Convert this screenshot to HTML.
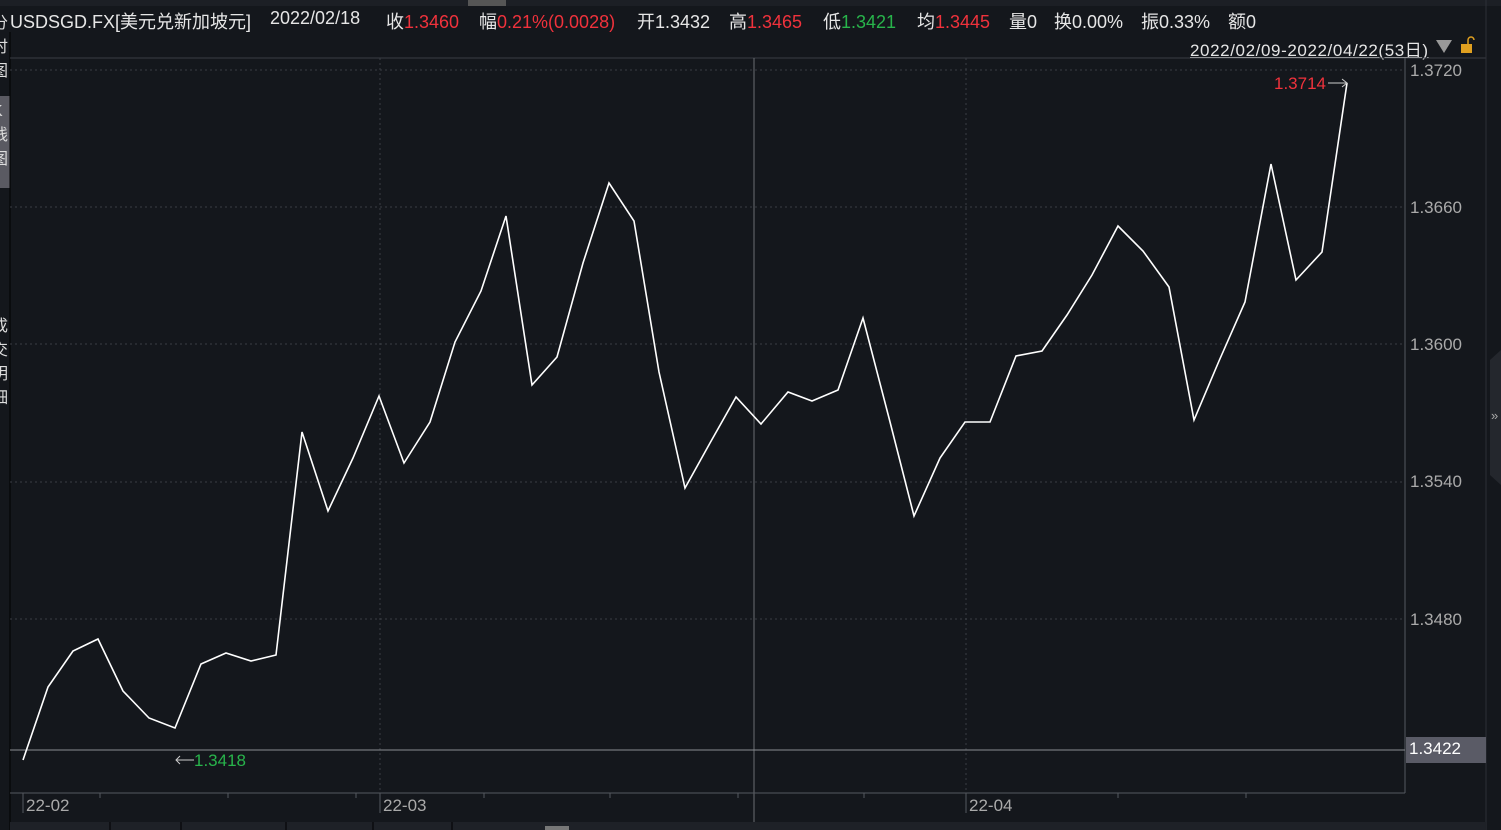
<!DOCTYPE html>
<html><head><meta charset="utf-8"><style>
body{margin:0;width:1501px;height:830px;background:#14171c;overflow:hidden;font-family:"Liberation Sans","Noto Sans CJK SC",sans-serif;position:relative}
.t{position:absolute;white-space:nowrap;font-size:18px;color:#e6e6e6}
.h{top:8px;font-size:18px}
.r{color:#f0323c}.g{color:#28b44b}
.a{font-size:17px;color:#aaa}
</style></head><body>
<div style="position:absolute;left:0;top:0;width:1501px;height:6px;background:#1c1f25"></div>
<div style="position:absolute;left:468px;top:0;width:38px;height:6px;background:#555"></div>
<div class="t h" style="left:10px">USDSGD.FX[美元兑新加坡元]</div>
<div class="t h" style="left:270px">2022/02/18</div>
<div class="t h" style="left:386px">收<span class="r">1.3460</span></div>
<div class="t h" style="left:479px">幅<span class="r">0.21%(0.0028)</span></div>
<div class="t h" style="left:637px">开1.3432</div>
<div class="t h" style="left:729px">高<span class="r">1.3465</span></div>
<div class="t h" style="left:823px">低<span class="g">1.3421</span></div>
<div class="t h" style="left:917px">均<span class="r">1.3445</span></div>
<div class="t h" style="left:1009px">量0</div>
<div class="t h" style="left:1054px">换0.00%</div>
<div class="t h" style="left:1141px">振0.33%</div>
<div class="t h" style="left:1228px">额0</div>
<div class="t" style="left:1190px;top:36px;font-size:17px;letter-spacing:0.6px;text-decoration:underline">2022/02/09-2022/04/22(53日)</div>
<svg style="position:absolute;left:0;top:0" width="1501" height="830">
<rect x="0" y="96" width="10" height="92" fill="#5a5a62"/>
<line x1="10" y1="32" x2="10" y2="830" stroke="#000"/>
<polygon points="1436,40 1452,40 1444,53" fill="#999"/>
<rect x="1461" y="44" width="11" height="9" fill="#e0a020"/><path d="M1468 44v-4a3 3 0 0 1 6 0" stroke="#e0a020" stroke-width="1.5" fill="none"/>
<line x1="10" y1="58" x2="1486" y2="58" stroke="#3a3d44"/>
<g stroke="#3a3d44" stroke-dasharray="2,3"><line x1="10" y1="70" x2="1405" y2="70"/><line x1="10" y1="207" x2="1405" y2="207"/><line x1="10" y1="344" x2="1405" y2="344"/><line x1="10" y1="482" x2="1405" y2="482"/><line x1="10" y1="619" x2="1405" y2="619"/><line x1="380" y1="58" x2="380" y2="793"/><line x1="966" y1="58" x2="966" y2="793"/></g>
<line x1="1405" y1="58" x2="1405" y2="793" stroke="#55585f"/>
<line x1="1486" y1="0" x2="1486" y2="830" stroke="#2c2f36"/>
<path d="M1490 360l11-10v135l-11-10z" fill="#24272d"/>
<line x1="754" y1="58" x2="754" y2="822" stroke="#6a6d72"/>
<line x1="10" y1="750" x2="1405" y2="750" stroke="#8a8d92"/>
<rect x="1406" y="737" width="80" height="26" fill="#5a5b66"/>
<line x1="10" y1="793" x2="1405" y2="793" stroke="#55585f"/>
<g stroke="#55585f"><line x1="23" y1="793" x2="23" y2="813"/><line x1="380" y1="793" x2="380" y2="813"/><line x1="966" y1="793" x2="966" y2="813"/><line x1="100" y1="793" x2="100" y2="798"/><line x1="228" y1="793" x2="228" y2="798"/><line x1="356" y1="793" x2="356" y2="798"/><line x1="484" y1="793" x2="484" y2="798"/><line x1="610" y1="793" x2="610" y2="798"/><line x1="738" y1="793" x2="738" y2="798"/><line x1="864" y1="793" x2="864" y2="798"/><line x1="1118" y1="793" x2="1118" y2="798"/><line x1="1246" y1="793" x2="1246" y2="798"/></g>
<rect x="10" y="822" width="1476" height="8" fill="#1e2127"/>
<g stroke="#000"><line x1="110" y1="822" x2="110" y2="830"/><line x1="181" y1="822" x2="181" y2="830"/><line x1="286" y1="822" x2="286" y2="830"/><line x1="373" y1="822" x2="373" y2="830"/><line x1="452" y1="822" x2="452" y2="830"/></g>
<rect x="545" y="826" width="24" height="4" fill="#777"/>
<polyline fill="none" stroke="#fff" stroke-width="1.6" points="23,760 48,687 73,651 98,639 123,691 149,718 175,728 201,664 226,653 251,661 276,655 302,432 328,511 353,458 379,396 404,463 430,422 455,342 481,291 506,216 532,385 557,357 583,263 609,183 634,221 659,372 685,488 710,443 736,397 761,424 788,392 812,401 838,390 863,318 889,418 914,516 940,458 965,422 990,422 1016,356 1042,351 1067,315 1092,275 1118,226 1143,251 1169,287 1194,420 1219,361 1245,302 1271,164 1296,280 1322,252 1347,83"/>
<path d="M1328 83h19M1342 79l5 4-5 4" stroke="#ccc" fill="none"/>
<path d="M176 760h18M180 756l-4 4 4 4" stroke="#ccc" fill="none"/>
</svg>
<div class="t r" style="left:1274px;top:74px;font-size:17px">1.3714</div>
<div class="t g" style="left:194px;top:751px;font-size:17px">1.3418</div>
<div class="t a" style="left:1410px;top:61px">1.3720</div>
<div class="t a" style="left:1410px;top:198px">1.3660</div>
<div class="t a" style="left:1410px;top:335px">1.3600</div>
<div class="t a" style="left:1410px;top:472px">1.3540</div>
<div class="t a" style="left:1410px;top:610px">1.3480</div>
<div class="t" style="left:1409px;top:739px;font-size:17px;color:#fff">1.3422</div>
<div class="t" style="left:1491px;top:408px;font-size:13px;color:#aaa">»</div>
<div class="t a" style="left:26px;top:796px">22-02</div>
<div class="t a" style="left:383px;top:796px">22-03</div>
<div class="t a" style="left:969px;top:796px">22-04</div>
<div class="t" style="left:-8px;top:12px;font-size:16px;line-height:24px;width:16px;white-space:normal;color:#ddd">分时图</div>
<div class="t" style="left:-8px;top:100px;font-size:16px;line-height:24px;width:16px;white-space:normal;color:#ddd">K线图</div>
<div class="t" style="left:-8px;top:315px;font-size:16px;line-height:24px;width:16px;white-space:normal;color:#ddd">成交明细</div>
</body></html>
